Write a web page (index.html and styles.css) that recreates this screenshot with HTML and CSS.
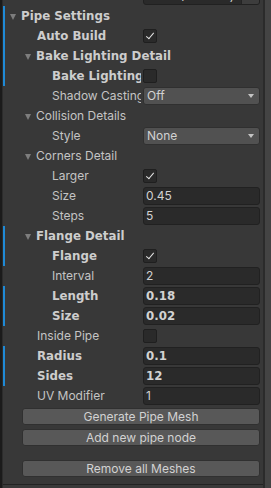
FILE: index.html
```html
<!DOCTYPE html>
<html lang="en">
<head>
  <meta charset="UTF-8" />
  <title>Pipe Settings</title>
  <link rel="stylesheet" href="styles.css">
</head>
<body>
  <div class="inspector">
    <div class="gutter"></div>
    <div class="content">
      <div class="row row-cut">
        <div class="label l0">Material Color</div>
        <div class="field object">
          <span>None (Material)</span>
          <span class="picker"><span class="dot"></span></span>
        </div>
      </div>

      <div class="row override">
        <div class="fold f0 bold"><span class="arrow"></span>Pipe Settings</div>
      </div>
      <div class="row override">
        <div class="label l1 bold">Auto Build</div>
        <div class="check on"></div>
      </div>
      <div class="row override">
        <div class="fold f1 bold"><span class="arrow"></span>Bake Lighting Detail</div>
      </div>
      <div class="row override">
        <div class="label l2 bold">Bake Lighting</div>
        <div class="check"></div>
      </div>
      <div class="row">
        <div class="label l2">Shadow Casting</div>
        <div class="field dropdown">Off</div>
      </div>

      <div class="row">
        <div class="fold f1"><span class="arrow"></span>Collision Details</div>
      </div>
      <div class="row">
        <div class="label l2">Style</div>
        <div class="field dropdown">None</div>
      </div>

      <div class="row">
        <div class="fold f1"><span class="arrow"></span>Corners Detail</div>
      </div>
      <div class="row">
        <div class="label l2">Larger</div>
        <div class="check on"></div>
      </div>
      <div class="row">
        <div class="label l2">Size</div>
        <div class="field">0.45</div>
      </div>
      <div class="row">
        <div class="label l2">Steps</div>
        <div class="field">5</div>
      </div>

      <div class="row override">
        <div class="fold f1 bold"><span class="arrow"></span>Flange Detail</div>
      </div>
      <div class="row override">
        <div class="label l2 bold">Flange</div>
        <div class="check on"></div>
      </div>
      <div class="row">
        <div class="label l2">Interval</div>
        <div class="field">2</div>
      </div>
      <div class="row override">
        <div class="label l2 bold">Length</div>
        <div class="field bold">0.18</div>
      </div>
      <div class="row override">
        <div class="label l2 bold">Size</div>
        <div class="field bold">0.02</div>
      </div>

      <div class="row">
        <div class="label l1">Inside Pipe</div>
        <div class="check"></div>
      </div>
      <div class="row override">
        <div class="label l1 bold">Radius</div>
        <div class="field bold">0.1</div>
      </div>
      <div class="row override">
        <div class="label l1 bold">Sides</div>
        <div class="field bold">12</div>
      </div>
      <div class="row">
        <div class="label l1">UV Modifier</div>
        <div class="field">1</div>
      </div>

      <div class="btn first">Generate Pipe Mesh</div>
      <div class="btn">Add new pipe node</div>
      <div class="btn spaced">Remove all Meshes</div>

      <div class="footer"></div>
    </div>
    <div class="scrollbar"></div>
  </div>
</body>
</html>
```

FILE: styles.css
```css
body {
  margin: 0;
  background: #383838;
  font-family: Inter, "Noto Sans", sans-serif;
  font-size: 12px;
  color: #c4c4c4;
  overflow: hidden;
}
.inspector {
  display: flex;
  height: 488px;
}
.gutter {
  width: 2px;
  background: #1b1b1b;
  border-right: 1px solid #2c2c2c;
}
.content {
  flex: 1;
  display: flex;
  flex-direction: column;
  min-width: 0;
}
.scrollbar {
  width: 6px;
  background: #444444;
  border-left: 2px solid #2b2b2b;
}

.row {
  display: flex;
  align-items: center;
  height: 20px;
  border-left: 2px solid transparent;
  flex-shrink: 0;
}
.row.override {
  border-left-color: #1f8ad6;
}
.row-cut {
  margin-top: -14px;
}
/* unity's bold editor text is wide, verdana-like */
.bold {
  font-family: "DejaVu Sans", Verdana, sans-serif;
  font-weight: 700;
  font-size: 11.8px;
  color: #cdcdcd;
}

.label {
  width: 136px;
  margin-right: 2px;
  box-sizing: border-box;
  white-space: nowrap;
  overflow: hidden;
  line-height: 20px;
}
.l0 { padding-left: 17px; }
.l1 { padding-left: 32px; }
.l2 { padding-left: 47px; }

.fold {
  display: flex;
  align-items: center;
  white-space: nowrap;
  line-height: 20px;
}
.f0 { padding-left: 5px; }
.f1 { padding-left: 20px; }
.arrow {
  width: 0;
  height: 0;
  border-left: 3.5px solid transparent;
  border-right: 3.5px solid transparent;
  border-top: 6px solid #7d7d7d;
  margin-right: 5px;
  margin-top: 1px;
}

.field {
  flex: 1;
  height: 18px;
  margin-right: 3px;
  box-sizing: border-box;
  background: #2a2a2a;
  border: 1px solid #212121;
  border-radius: 3px;
  padding-left: 2px;
  line-height: 16px;
  color: #d2d2d2;
  white-space: nowrap;
  overflow: hidden;
}
.field.dropdown {
  position: relative;
  background: #515151;
  border-color: #303030;
  padding-left: 3px;
}
.field.dropdown::after {
  content: "";
  position: absolute;
  right: 5px;
  top: 6px;
  border-left: 3.5px solid transparent;
  border-right: 3.5px solid transparent;
  border-top: 4px solid #c4c4c4;
}
.field.object {
  display: flex;
  justify-content: space-between;
  background: #2a2a2a;
  padding-right: 0;
}
.picker {
  width: 17px;
  background: #3d3d3d;
  border-left: 1px solid #242424;
  display: flex;
  align-items: center;
  justify-content: center;
}
.dot {
  width: 6px;
  height: 6px;
  border: 1px solid #c4c4c4;
  border-radius: 50%;
}

.check {
  width: 14px;
  height: 14px;
  box-sizing: border-box;
  background: #2a2a2a;
  border: 1px solid #1f1f1f;
  border-radius: 2px;
  position: relative;
}
.check.on::after {
  content: "";
  position: absolute;
  left: 4px;
  top: 1px;
  width: 3px;
  height: 7px;
  border-right: 1.5px solid #e6e6e6;
  border-bottom: 1.5px solid #e6e6e6;
  transform: rotate(40deg);
}

.btn {
  flex-shrink: 0;
  height: 17px;
  margin: 4px 3px 0 19px;
  box-sizing: border-box;
  background: #585858;
  border: 1px solid #303030;
  border-radius: 3px;
  line-height: 15px;
  text-align: center;
  color: #d2d2d2;
}
.btn.first {
  margin-top: 2px;
}
.btn.spaced {
  margin-top: 14px;
}

.footer {
  margin-top: auto;
  height: 3px;
  border-top: 1px solid #232323;
  background: #3a3a3a;
}
```
